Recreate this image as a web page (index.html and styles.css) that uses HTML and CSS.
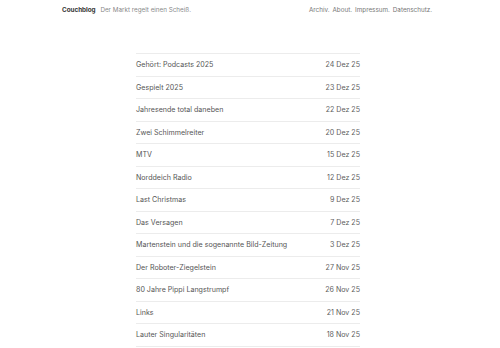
FILE: index.html
```html
<!DOCTYPE html>
<html lang="de">
<head>
    <meta charset="UTF-8">
    <meta name="viewport" content="width=device-width, initial-scale=1.0">
    <title>Couchblog</title>
    <link rel="stylesheet" href="styles.css">
</head>
<body>
    <div class="header">
        <div class="brand">
            <a href="#" class="logo">Couchblog</a>
            <span class="tagline">Der Markt regelt einen Scheiß.</span>
        </div>
        <nav class="nav">
            <a href="#">Archiv.</a>
            <a href="#">About.</a>
            <a href="#">Impressum.</a>
            <a href="#">Datenschutz.</a>
        </nav>
    </div>

    <ul class="posts">
        <li><a href="#">Gehört: Podcasts 2025</a><span class="date">24 Dez 25</span></li>
        <li><a href="#">Gespielt 2025</a><span class="date">23 Dez 25</span></li>
        <li><a href="#">Jahresende total daneben</a><span class="date">22 Dez 25</span></li>
        <li><a href="#">Zwei Schimmelreiter</a><span class="date">20 Dez 25</span></li>
        <li><a href="#">MTV</a><span class="date">15 Dez 25</span></li>
        <li><a href="#">Norddeich Radio</a><span class="date">12 Dez 25</span></li>
        <li><a href="#">Last Christmas</a><span class="date">9 Dez 25</span></li>
        <li><a href="#">Das Versagen</a><span class="date">7 Dez 25</span></li>
        <li><a href="#">Martenstein und die sogenannte Bild-Zeitung</a><span class="date">3 Dez 25</span></li>
        <li><a href="#">Der Roboter-Ziegelstein</a><span class="date">27 Nov 25</span></li>
        <li><a href="#">80 Jahre Pippi Langstrumpf</a><span class="date">26 Nov 25</span></li>
        <li><a href="#">Links</a><span class="date">21 Nov 25</span></li>
        <li><a href="#">Lauter Singularitäten</a><span class="date">18 Nov 25</span></li>
        <li><a href="#">Links</a><span class="date">14 Nov 25</span></li>
        <li><a href="#">Herbst</a><span class="date">11 Nov 25</span></li>
        <li><a href="#">Links</a><span class="date">7 Nov 25</span></li>
        <li><a href="#">Gelesen</a><span class="date">3 Nov 25</span></li>
        <li><a href="#">Links</a><span class="date">31 Okt 25</span></li>
        <li><a href="#">Zeitumstellung</a><span class="date">26 Okt 25</span></li>
        <li><a href="#">Links</a><span class="date">24 Okt 25</span></li>
        <li><a href="#">Gehört</a><span class="date">20 Okt 25</span></li>
        <li><a href="#">Links</a><span class="date">17 Okt 25</span></li>
        <li><a href="#">Gespielt</a><span class="date">12 Okt 25</span></li>
        <li><a href="#">Links</a><span class="date">10 Okt 25</span></li>
        <li><a href="#">Links</a><span class="date">3 Okt 25</span></li>
        <li><a href="#">Links</a><span class="date">26 Sep 25</span></li>
        <li><a href="#">Links</a><span class="date">19 Sep 25</span></li>
        <li><a href="#">Links</a><span class="date">12 Sep 25</span></li>
        <li><a href="#">Links</a><span class="date">5 Sep 25</span></li>
        <li><a href="#">Links</a><span class="date">29 Aug 25</span></li>
        <li><a href="#">Links</a><span class="date">22 Aug 25</span></li>
        <li><a href="#">Links</a><span class="date">15 Aug 25</span></li>
        <li><a href="#">Links</a><span class="date">8 Aug 25</span></li>
        <li><a href="#">Links</a><span class="date">1 Aug 25</span></li>
        <li><a href="#">Links</a><span class="date">25 Jul 25</span></li>
        <li><a href="#">Links</a><span class="date">18 Jul 25</span></li>
        <li><a href="#">Links</a><span class="date">11 Jul 25</span></li>
    </ul>
</body>
</html>
```

FILE: styles.css
```css
body {
    margin: 0;
    padding: 0;
    font-family: 'Inter', 'DejaVu Sans', sans-serif;
    font-size: 7.1px;
    color: #555;
    background: #fff;
}

a {
    color: inherit;
    text-decoration: none;
}

/* Header */
.header {
    display: flex;
    justify-content: space-between;
    align-items: baseline;
    width: 370px;
    margin-left: 62px;
    padding-top: 6px;
    line-height: 9px;
    font-size: 6.3px;
}

.header .logo {
    font-weight: bold;
    color: #333;
    margin-right: 3px;
}

.header .tagline {
    color: #8a8a8a;
}

.nav {
    display: flex;
    gap: 3px;
    color: #777;
}

/* Post list */
.posts {
    list-style: none;
    margin: 38px 0 40px 136px;
    padding: 0;
    width: 224px;
    border-bottom: 1px solid #ececec;
}

.posts li {
    display: flex;
    justify-content: space-between;
    padding: 6px 0;
    line-height: 9.5px;
    border-top: 1px solid #ececec;
}

.posts .date {
    color: #606060;
}
```
